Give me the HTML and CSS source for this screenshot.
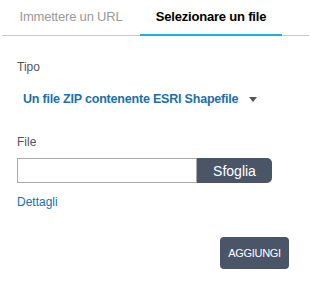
FILE: index.html
```html
<!DOCTYPE html>
<html lang="it">
<head>
  <meta charset="UTF-8">
  <meta name="viewport" content="width=device-width, initial-scale=1.0">
  <title>Aggiungi dati</title>
  <link rel="stylesheet" href="styles.css">
</head>
<body>
  <div class="tabs">
    <div class="tab">Immettere un URL</div>
    <div class="tab active">Selezionare un file</div>
  </div>

  <div class="panel">
    <div class="label">Tipo</div>
    <div class="select">
      <span>Un file ZIP contenente ESRI Shapefile</span>
      <span class="caret"></span>
    </div>

    <div class="label file-label">File</div>
    <div class="file-row">
      <input type="text" class="file-input">
      <button class="browse">Sfoglia</button>
    </div>
    <a class="details" href="#">Dettagli</a>

    <div class="actions">
      <button class="add">AGGIUNGI</button>
    </div>
  </div>
</body>
</html>
```

FILE: styles.css
```css
body {
  font-family: "Liberation Sans", Arial, sans-serif;
  margin: 0;
  background: #fff;
  color: #333;
}
.tabs {
  display: flex;
  margin: 0 2px;
  height: 36px;
  border-bottom: 1px solid #c8c8c8;
  box-sizing: border-box;
}
.tab {
  width: 138px;
  text-align: center;
  font-size: 13px;
  line-height: 34px;
  color: #999;
  letter-spacing: -0.2px;
}
.tab.active {
  width: 142px;
  color: #000;
  font-weight: bold;
  border-bottom: 2px solid #23b0cc;
  margin-bottom: -1px;
  line-height: 33px;
}
.panel {
  padding: 23px 17px 0 17px;
}
.label {
  font-size: 12px;
  color: #555;
  line-height: 16px;
}
.select {
  display: flex;
  align-items: center;
  margin: 16px 0 0 6px;
  font-size: 12.5px;
  font-weight: bold;
  color: #1a70aa;
  line-height: 16px;
  letter-spacing: -0.2px;
}
.caret {
  width: 0;
  height: 0;
  margin-left: 11px;
  border-left: 4px solid transparent;
  border-right: 4px solid transparent;
  border-top: 5px solid #555;
}
.file-label {
  margin-top: 27px;
}
.file-row {
  display: flex;
  margin-top: 8px;
  height: 25px;
}
.file-input {
  width: 180px;
  height: 25px;
  box-sizing: border-box;
  border: 1px solid #a9a9a9;
  padding: 0 4px;
  margin: 0;
}
.browse {
  width: 75px;
  height: 25px;
  border: none;
  border-radius: 0 5px 5px 0;
  background: #4a5568;
  color: #fff;
  font-family: "Liberation Sans", Arial, sans-serif;
  font-size: 14px;
  padding: 0;
  margin: 0;
}
.details {
  display: block;
  margin-top: 12px;
  font-size: 12px;
  color: #1a70aa;
  text-decoration: none;
  line-height: 14px;
}
.actions {
  display: flex;
  justify-content: flex-end;
  margin-top: 28px;
  padding-right: 5px;
}
.add {
  width: 69px;
  height: 32px;
  border: none;
  border-radius: 4px;
  background: #4a5568;
  color: #fff;
  font-family: "Liberation Sans", Arial, sans-serif;
  font-size: 11px;
  letter-spacing: -0.3px;
  padding: 0;
}
```
